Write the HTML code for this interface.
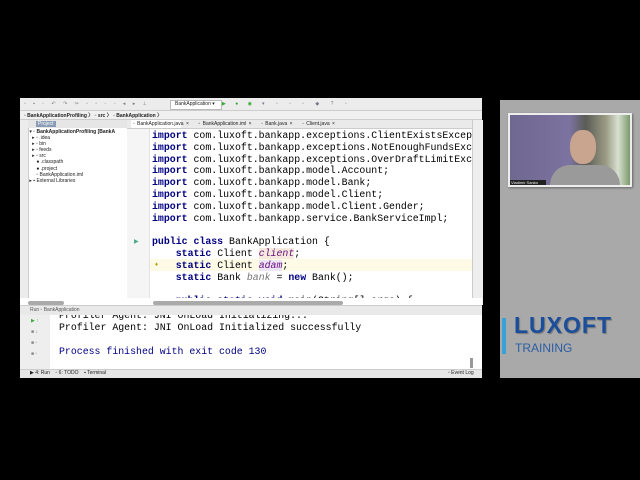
<!DOCTYPE html><html><head><style>
body{margin:0;width:640px;height:480px;background:#000;position:relative;overflow:hidden;font-family:"Liberation Sans",sans-serif}
.a{position:absolute}
.code{font-family:"Liberation Mono",monospace;font-size:9.9px;white-space:pre;color:#000;line-height:11.8px}
.k{color:#000080;font-weight:bold}
.s{font-size:5px;color:#222;white-space:nowrap}
</style></head><body>
<div class="a" style="left:20px;top:98px;width:462px;height:280px;background:#fff"></div>
<div class="a" style="left:20px;top:98px;width:462px;height:12px;background:#ececec;border-bottom:1px solid #ccc"></div>
<div class="a s" style="left:24px;top:101px;color:#777;letter-spacing:3px">▫ ▪ ◦ ↶ ↷ ✂ ▫ ▫ ◦ ◦ ◂ ▸ ⊥</div>
<div class="a" style="left:170px;top:100px;width:50px;height:8px;background:#fff;border:1px solid #bbb"></div>
<div class="a s" style="left:175px;top:101px">BankApplication ▾</div>
<div class="a s" style="left:222px;top:101px;color:#3a3;letter-spacing:4px">▶ ● ◉</div>
<div class="a s" style="left:262px;top:101px;color:#778;letter-spacing:5px">▾ ▫ ▫ ▫ ◆ ? ▫</div>
<div class="a" style="left:20px;top:111px;width:462px;height:8px;background:#f0f0f0;border-bottom:1px solid #ccc"></div>
<div class="a s" style="left:24px;top:112px;font-weight:bold">▫ BankApplicationProfiling 〉 ▫ src 〉 ◦ BankApplication 〉</div>
<div class="a" style="left:20px;top:120px;width:8px;height:252px;background:#ececec;border-right:1px solid #ccc"></div>
<div class="a" style="left:28px;top:120px;width:99px;height:8px;background:#e6e6e6"></div>
<div class="a" style="left:36px;top:121px;width:20px;height:6px;background:#8a9cb5"></div>
<div class="a s" style="left:38px;top:121px;color:#fff">Project</div>
<div class="a s" style="left:28px;top:129px;line-height:6.1px">&nbsp;▾ ▫ <b>BankApplicationProfiling [BankA</b><br>&nbsp;&nbsp;&nbsp;▸ ▫ .idea<br>&nbsp;&nbsp;&nbsp;▸ ▫ bin<br>&nbsp;&nbsp;&nbsp;▸ ▫ feeds<br>&nbsp;&nbsp;&nbsp;▸ ▫ src<br>&nbsp;&nbsp;&nbsp;&nbsp;&nbsp;&nbsp;● .classpath<br>&nbsp;&nbsp;&nbsp;&nbsp;&nbsp;&nbsp;● .project<br>&nbsp;&nbsp;&nbsp;&nbsp;&nbsp;&nbsp;▫ BankApplication.iml<br>&nbsp;▸ ▪ External Libraries</div>
<div class="a" style="left:127px;top:120px;width:345px;height:8px;background:#eaeaea;border-bottom:1px solid #ccc"></div>
<div class="a" style="left:131px;top:120px;width:50px;height:8px;background:#fff"></div>
<div class="a s" style="left:133px;top:121px;word-spacing:1px">◦ BankApplication.java ×&nbsp;&nbsp;&nbsp; ▫ BankApplication.iml ×&nbsp;&nbsp;&nbsp; ◦ Bank.java ×&nbsp;&nbsp;&nbsp; ◦ Client.java ×</div>
<div class="a" style="left:127px;top:129px;width:22px;height:176px;background:#f5f5f5;border-right:1px solid #e3e3e3"></div>
<div class="a" style="left:150px;top:259px;width:322px;height:12px;background:#fdfbe6"></div>
<div class="a code" style="left:152px;top:130px"><span class="k">import</span> com.luxoft.bankapp.exceptions.ClientExistsExcep
<span class="k">import</span> com.luxoft.bankapp.exceptions.NotEnoughFundsExce
<span class="k">import</span> com.luxoft.bankapp.exceptions.OverDraftLimitExce
<span class="k">import</span> com.luxoft.bankapp.model.Account;
<span class="k">import</span> com.luxoft.bankapp.model.Bank;
<span class="k">import</span> com.luxoft.bankapp.model.Client;
<span class="k">import</span> com.luxoft.bankapp.model.Client.Gender;
<span class="k">import</span> com.luxoft.bankapp.service.BankServiceImpl;

<span class="k">public class</span> BankApplication {
    <span class="k">static</span> Client <i style="color:#660e7a;background:#f6eadf">client</i>;
    <span class="k">static</span> Client <i style="color:#660e7a;background:#ede4f6">adam</i>;
    <span class="k">static</span> Bank <i style="color:#777">bank</i> = <span class="k">new</span> Bank();

    <span class="k">public static void</span> main(String[] args) {</div>
<div class="a" style="left:134px;top:238px;color:#4a8;font-size:6px">▶</div>
<div class="a" style="left:155px;top:262px;color:#b90;font-size:6px">♦</div>
<div class="a" style="left:472px;top:120px;width:10px;height:185px;background:#eee;border-left:1px solid #ccc"></div>
<div class="a" style="left:20px;top:298px;width:462px;height:7px;background:#fff"></div>
<div class="a" style="left:28px;top:301px;width:36px;height:4px;background:#aaa;border-radius:2px"></div>
<div class="a" style="left:153px;top:301px;width:190px;height:4px;background:#aaa;border-radius:2px"></div>
<div class="a" style="left:20px;top:314px;width:30px;height:56px;background:#eee"></div>
<div class="a s" style="left:31px;top:316px;color:#4a4;line-height:11px">▶ ↑<br><span style="color:#888">■ ↓<br>■ ▫<br>■ ▫</span></div>
<div class="a code" style="left:59px;top:310px;line-height:11.9px">Profiler Agent: JNI OnLoad Initializing...
Profiler Agent: JNI OnLoad Initialized successfully

<span style="color:#000080">Process finished with exit code 130</span></div>
<div class="a" style="left:20px;top:305px;width:462px;height:9px;background:#e9e9e9;border-top:1px solid #ccc"></div>
<div class="a s" style="left:30px;top:307px;color:#555">Run ▫ BankApplication</div>
<div class="a" style="left:470px;top:358px;width:3px;height:10px;background:#999"></div>
<div class="a" style="left:20px;top:369px;width:462px;height:8px;background:#e6e6e6;border-top:1px solid #ccc"></div>
<div class="a s" style="left:30px;top:370px">▶ 4: Run &nbsp;&nbsp; ▫ 6: TODO &nbsp;&nbsp; ▪ Terminal</div>
<div class="a s" style="left:448px;top:370px">▫ Event Log</div>
<div class="a" style="left:500px;top:100px;width:140px;height:278px;background:#a9a9a9"></div>
<div class="a" style="left:508px;top:113px;width:124px;height:74px;background:#eee;box-shadow:1px 1px 2px #666"></div>
<div class="a" style="left:510px;top:115px;width:120px;height:70px;background:linear-gradient(90deg,#6f6890 0%,#7c73a0 50%,#5a5c55 63%,#9b9b85 80%,#d8e0d0 90%,#7b9a6c 100%)"></div>
<div class="a" style="left:570px;top:130px;width:26px;height:34px;background:#c9a590;border-radius:45%"></div>
<div class="a" style="left:550px;top:165px;width:70px;height:20px;background:#9a9a9a;border-radius:20px 20px 0 0"></div>
<div class="a" style="left:510px;top:180px;width:36px;height:5px;background:#222"></div>
<div class="a" style="left:511px;top:180px;font-size:4px;color:#eee">Vladimir Sanko</div>
<div class="a" style="left:502px;top:318px;width:4px;height:36px;background:#3aa0d8"></div>
<div class="a" style="left:514px;top:312px;font-size:23px;font-weight:bold;color:#1b4e9a;letter-spacing:1px;text-shadow:1px 1px 1px #777">LUXOFT</div>
<div class="a" style="left:515px;top:341px;font-size:12px;color:#2c5ea5">TRAINING</div>
</body></html>
